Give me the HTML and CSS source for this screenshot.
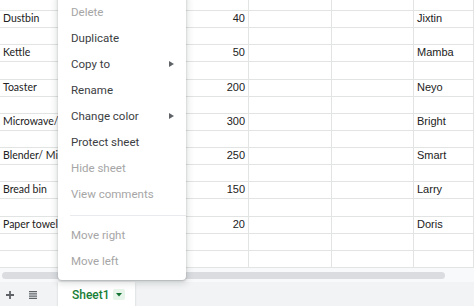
FILE: index.html
```html
<!DOCTYPE html>
<html lang="en">
<head>
    <meta charset="UTF-8">
    <title>Sheet menu</title>
    <link rel="stylesheet" href="styles.css">
</head>
<body>
    <div class="sheet">
        <div class="grid">
            <div class="cell"></div><div class="cell"></div><div class="cell"></div><div class="cell"></div><div class="cell"></div>
            <div class="cell name">Dustbin</div><div class="cell num">40</div><div class="cell"></div><div class="cell"></div><div class="cell">Jixtin</div>
            <div class="cell"></div><div class="cell"></div><div class="cell"></div><div class="cell"></div><div class="cell"></div>
            <div class="cell name">Kettle</div><div class="cell num">50</div><div class="cell"></div><div class="cell"></div><div class="cell">Mamba</div>
            <div class="cell"></div><div class="cell"></div><div class="cell"></div><div class="cell"></div><div class="cell"></div>
            <div class="cell name">Toaster</div><div class="cell num">200</div><div class="cell"></div><div class="cell"></div><div class="cell">Neyo</div>
            <div class="cell"></div><div class="cell"></div><div class="cell"></div><div class="cell"></div><div class="cell"></div>
            <div class="cell name">Microwave/Oven</div><div class="cell num">300</div><div class="cell"></div><div class="cell"></div><div class="cell">Bright</div>
            <div class="cell"></div><div class="cell"></div><div class="cell"></div><div class="cell"></div><div class="cell"></div>
            <div class="cell name">Blender/ Mixer</div><div class="cell num">250</div><div class="cell"></div><div class="cell"></div><div class="cell">Smart</div>
            <div class="cell"></div><div class="cell"></div><div class="cell"></div><div class="cell"></div><div class="cell"></div>
            <div class="cell name">Bread bin</div><div class="cell num">150</div><div class="cell"></div><div class="cell"></div><div class="cell">Larry</div>
            <div class="cell"></div><div class="cell"></div><div class="cell"></div><div class="cell"></div><div class="cell"></div>
            <div class="cell name">Paper towel</div><div class="cell num">20</div><div class="cell"></div><div class="cell"></div><div class="cell">Doris</div>
            <div class="cell"></div><div class="cell"></div><div class="cell"></div><div class="cell"></div><div class="cell"></div>
            <div class="cell"></div><div class="cell"></div><div class="cell"></div><div class="cell"></div><div class="cell"></div>
        </div>

        <div class="hscroll"><div class="thumb"></div></div>

        <div class="tabbar">
            <span class="bar-icon add">
                <svg width="8" height="8" viewBox="0 0 8 8"><path d="M4 0v8M0 4h8" stroke="#5f6368" stroke-width="1.8"/></svg>
            </span>
            <span class="bar-icon list">
                <svg width="8" height="8" viewBox="0 0 8 8"><path d="M0 0.6h8M0 2.9h8M0 5.1h8M0 7.4h8" stroke="#5f6368" stroke-width="1.2"/></svg>
            </span>
            <div class="tab">
                <span class="tab-name">Sheet1</span>
                <span class="tab-drop">
                    <svg width="6" height="4" viewBox="0 0 6 4"><path d="M0 0h6L3 3.5z" fill="#137333"/></svg>
                </span>
            </div>
        </div>

        <div class="menu">
            <div class="item off">Delete</div>
            <div class="item">Duplicate</div>
            <div class="item">Copy to <span class="arrow"></span></div>
            <div class="item">Rename</div>
            <div class="item">Change color <span class="arrow"></span></div>
            <div class="item">Protect sheet</div>
            <div class="item off">Hide sheet</div>
            <div class="item off">View comments</div>
            <div class="sep"></div>
            <div class="item off">Move right</div>
            <div class="item off">Move left</div>
        </div>
    </div>
</body>
</html>
```

FILE: styles.css
```css
* {
    margin: 0;
    padding: 0;
    box-sizing: border-box;
}

body {
    font-family: "Liberation Sans", Arial, sans-serif;
    background: #fff;
    overflow: hidden;
}

.sheet {
    position: relative;
    width: 474px;
    height: 306px;
    overflow: hidden;
}

.grid {
    display: grid;
    grid-template-columns: 59px 190px 83px 82px 1fr;
    grid-template-rows: 11px repeat(15, 17.14px);
}

.cell {
    border-right: 1px solid #e2e3e3;
    border-bottom: 1px solid #e2e3e3;
    font-size: 11px;
    color: #222;
    padding: 0 3px 2px;
    white-space: nowrap;
    overflow: hidden;
    display: flex;
    align-items: flex-end;
    line-height: 13px;
}

.cell.name {
    font-family: Lato, "Open Sans", sans-serif;
    font-size: 10.5px;
    padding-right: 0;
}

.cell.num {
    justify-content: flex-end;
}

.hscroll {
    height: 14px;
    background: #f8f9fa;
    padding: 4px 0 0 2px;
}

.thumb {
    width: 443px;
    height: 7px;
    border-radius: 4px;
    background: #dadce0;
}

.tabbar {
    height: 24px;
    background: #f1f3f4;
    display: flex;
    align-items: stretch;
    padding-left: 6px;
}

.bar-icon {
    width: 8px;
    display: flex;
    align-items: center;
    padding-top: 3px;
}

.bar-icon.add {
    margin-right: 15px;
}

.tab {
    margin-left: 21px;
    width: 77px;
    background: #fff;
    display: flex;
    align-items: center;
    padding: 2px 0 0 14px;
    box-shadow: 0 1px 2px rgba(60, 64, 67, 0.2);
}

.tab-name {
    font-family: Roboto, sans-serif;
    font-weight: 500;
    font-size: 12px;
    color: #188038;
}

.tab-drop {
    margin-left: 3px;
    width: 12px;
    height: 11px;
    background: #e6f4ea;
    border-radius: 2px;
    display: flex;
    align-items: center;
    justify-content: center;
}

.menu {
    position: absolute;
    left: 58px;
    top: -7px;
    width: 128px;
    background: #fff;
    padding: 6px 0;
    border-radius: 4px;
    box-shadow: 0 2px 6px 2px rgba(60, 64, 67, 0.15), 0 1px 2px rgba(60, 64, 67, 0.3);
    font-family: Roboto, sans-serif;
}

.item {
    height: 26px;
    line-height: 26px;
    padding-left: 13px;
    font-size: 11.5px;
    color: #3c4043;
    position: relative;
}

.item.off {
    color: #a6a6a6;
}

.arrow {
    position: absolute;
    right: 12px;
    top: 10px;
    border-left: 5px solid #5f6368;
    border-top: 3px solid transparent;
    border-bottom: 3px solid transparent;
}

.sep {
    height: 1px;
    background: #e8eaed;
    margin: 8px 0 6px 12px;
}
```
